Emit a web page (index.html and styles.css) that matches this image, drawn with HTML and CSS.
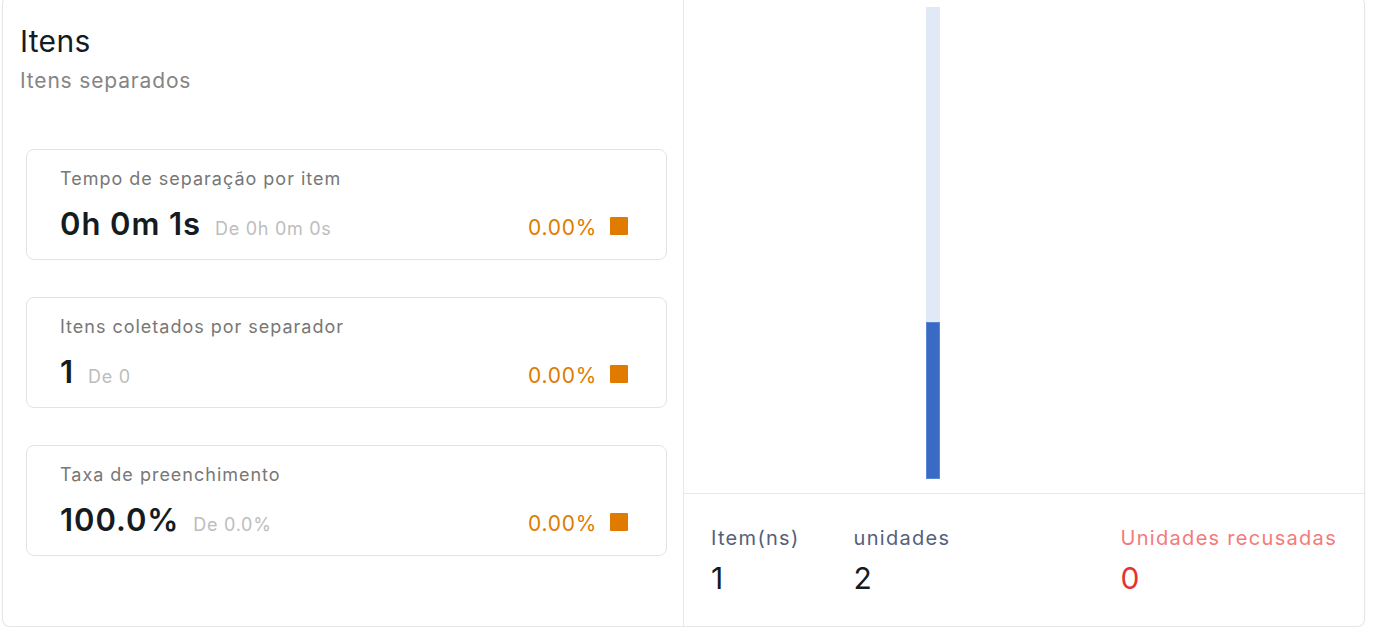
FILE: index.html
```html
<!DOCTYPE html>
<html lang="pt">
<head>
<meta charset="utf-8">
<link rel="stylesheet" href="styles.css">
</head>
<body>
<div class="panel">
  <section class="left">
    <h1 class="title">Itens</h1>
    <p class="subtitle">Itens separados</p>
    <div class="cards">
      <div class="card">
        <div class="card-label">Tempo de separação por item</div>
        <div class="card-row">
          <span class="card-value">0h 0m 1s</span>
          <span class="card-prev">De 0h 0m 0s</span>
          <span class="card-pct">0.00%</span>
          <span class="swatch"></span>
        </div>
      </div>
      <div class="card">
        <div class="card-label">Itens coletados por separador</div>
        <div class="card-row">
          <span class="card-value">1</span>
          <span class="card-prev">De 0</span>
          <span class="card-pct">0.00%</span>
          <span class="swatch"></span>
        </div>
      </div>
      <div class="card">
        <div class="card-label">Taxa de preenchimento</div>
        <div class="card-row">
          <span class="card-value">100.0%</span>
          <span class="card-prev">De 0.0%</span>
          <span class="card-pct">0.00%</span>
          <span class="swatch"></span>
        </div>
      </div>
    </div>
  </section>
  <section class="right">
    <div class="chart">
      <div class="bar">
        <div class="bar-fill" style="height: 33.3%"></div>
      </div>
    </div>
    <div class="stats">
      <div class="stat">
        <div class="stat-label">Item(ns)</div>
        <div class="stat-value">1</div>
      </div>
      <div class="stat">
        <div class="stat-label">unidades</div>
        <div class="stat-value">2</div>
      </div>
      <div class="stat stat-refused">
        <div class="stat-label">Unidades recusadas</div>
        <div class="stat-value">0</div>
      </div>
    </div>
  </section>
</div>
</body>
</html>
```

FILE: styles.css
```css
* { box-sizing: border-box; }
html, body {
  margin: 0;
  padding: 0;
  background: #ffffff;
  font-family: Inter, "Noto Sans", "Liberation Sans", sans-serif;
}
.panel {
  display: flex;
  width: 1363px;
  height: 631px;
  margin: -4px 0 0 2px;
  border: 1px solid #e6e6e6;
  border-radius: 8px;
  box-shadow: 0 1px 2px rgba(0,0,0,0.05);
  background: #fff;
  overflow: hidden;
}
.left {
  width: 681px;
  padding: 26px 16px 0 17px;
  border-right: 1px solid #e8e8e8;
}
.title {
  margin: 0;
  font-size: 30px;
  font-weight: 400;
  line-height: 36px;
  color: #151b22;
  letter-spacing: 0.01em;
}
.subtitle {
  margin: 8px 0 0;
  font-size: 21px;
  line-height: 28px;
  color: #858585;
  letter-spacing: 0.04em;
}
.cards {
  display: flex;
  flex-direction: column;
  gap: 37px;
  margin: 54px 0 0 6px;
}
.card {
  height: 111px;
  border: 1px solid #e3e3e3;
  border-radius: 8px;
  padding: 17px 38px 0 33px;
}
.card-label {
  font-size: 18px;
  line-height: 24px;
  color: #777777;
  letter-spacing: 0.055em;
}
.card-row {
  display: flex;
  align-items: baseline;
  margin-top: 14px;
}
.card-value {
  font-size: 31px;
  line-height: 38px;
  font-weight: 600;
  color: #141b22;
  letter-spacing: 0.03em;
}
.card-prev {
  margin-left: 14px;
  font-size: 18px;
  color: #bdbdbd;
  letter-spacing: 0.04em;
}
.card-pct {
  margin-left: auto;
  font-size: 21px;
  color: #e07b00;
  letter-spacing: 0.035em;
}
.swatch {
  width: 18px;
  height: 18px;
  margin-left: 13px;
  background: #e07b00;
  border-radius: 1px;
}
.right {
  flex: 1;
  display: flex;
  flex-direction: column;
}
.chart {
  height: 497px;
  border-bottom: 1px solid #e8e8e8;
  display: flex;
  padding-top: 10px;
  padding-left: 242px;
  padding-bottom: 14px;
}
.bar {
  width: 14px;
  height: 100%;
  background: #e1e9f7;
  display: flex;
  flex-direction: column;
  justify-content: flex-end;
}
.bar-fill {
  background: #3a6bc4;
  border: 1px solid #5a86d6;
}
.stats {
  display: flex;
  padding: 30px 27px 0 27px;
}
.stat + .stat { margin-left: 54px; }
.stat-refused { margin-left: auto !important; }
.stat-label {
  font-size: 20px;
  line-height: 28px;
  color: #55607a;
  letter-spacing: 0.065em;
}
.stat-value {
  margin-top: 8px;
  font-size: 30px;
  line-height: 36px;
  color: #141b22;
}
.stat-refused .stat-label { color: #f47a7a; }
.stat-refused .stat-value { color: #e5342d; }
```
